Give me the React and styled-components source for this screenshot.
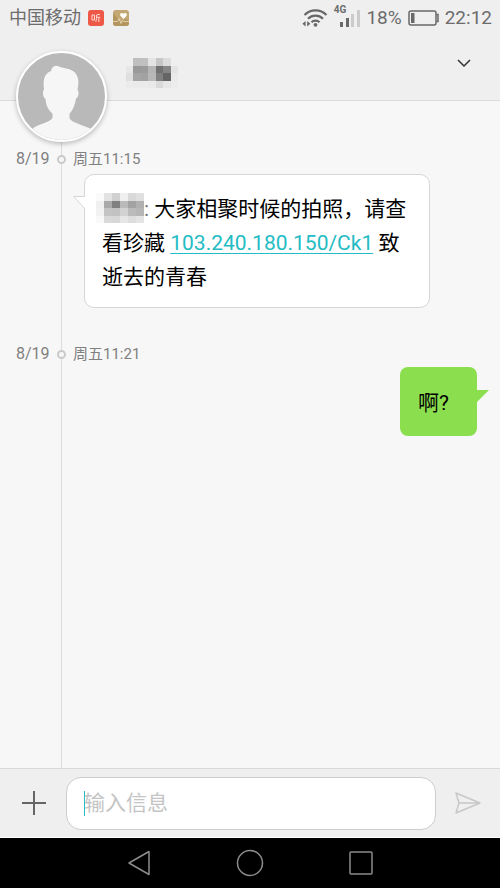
import React, { useState } from "react"
import styled, { createGlobalStyle } from "styled-components"

const GlobalStyle = createGlobalStyle`
  * {
    box-sizing: border-box;
  }
  body {
    margin: 0;
    background: #f7f7f7;
    font-family: Roboto, "Noto Sans CJK SC", sans-serif;
  }
  button {
    display: flex;
    align-items: center;
    justify-content: center;
    padding: 0;
    border: 0;
    background: none;
    cursor: pointer;
  }
  svg {
    display: block;
    flex-shrink: 0;
  }
`

const Screen = styled.div`
  display: flex;
  flex-direction: column;
  min-height: 100vh;
`

const StatusBar = styled.div`
  display: flex;
  align-items: center;
  justify-content: space-between;
  height: 36px;
  padding: 0 8px 0 9px;
  background: #efefef;
  color: #6c6c6c;
  font-size: 18px;
  line-height: 36px;
`

const StatusGroup = styled.div`
  display: flex;
  align-items: center;
  gap: ${props => props.$gap}px;
`

const StatusText = styled.span`
  font-size: 19px;
`

const NetworkLabel = styled.span`
  align-self: flex-start;
  margin-top: 5px;
  font-size: 10px;
  font-weight: 700;
  line-height: 10px;
`

const SignalGroup = styled.div`
  display: flex;
  align-items: center;
  height: 36px;
  svg {
    margin-left: -7px;
  }
`

const Header = styled.header`
  position: relative;
  display: flex;
  justify-content: space-between;
  height: 65px;
  padding: 22px 24px 0 126px;
  background: #efefef;
  border-bottom: 1px solid #dadada;
`

const Avatar = styled.div`
  position: absolute;
  top: 15px;
  left: 16px;
  z-index: 1;
  width: 91px;
  height: 91px;
  overflow: hidden;
  border: 2px solid #fff;
  border-radius: 50%;
  background: #b9b9b9;
  box-shadow: 0 2px 5px rgba(0, 0, 0, 0.25);
`

const MenuButton = styled.button`
  width: 24px;
  height: 24px;
  margin-top: -7px;
`

const Thread = styled.main`
  flex: 1;
  padding-top: 48px;
  background: linear-gradient(#dcdcdc, #dcdcdc) 61px 0 / 1px 100% no-repeat #f7f7f7;
`

const Entry = styled.section`
  display: flex;
  flex-direction: column;
  margin-bottom: 36px;
`

const Stamp = styled.div`
  display: grid;
  grid-template-columns: 41px 9px 1fr;
  align-items: center;
  height: 20px;
  margin-bottom: 3px;
  padding-left: 16px;
  color: #808080;
  font-size: 15px;
  line-height: 20px;
  time:first-child {
    font-size: 16px;
  }
  time:last-child {
    padding-left: 7px;
  }
`

const Dot = styled.span`
  width: 9px;
  height: 9px;
  border: 2px solid #cacaca;
  border-radius: 50%;
  background: #f7f7f7;
`

const Bubble = styled.div`
  position: relative;
  color: #000;
  font-size: 21px;
  line-height: 34px;
  p {
    margin: 0;
  }
`

const Received = styled(Bubble)`
  margin: 2px 70px 0 84px;
  padding: 17px 16px 13px 17px;
  border: 1px solid #d6d6d6;
  border-radius: 10px;
  background: #fff;
`

const Sent = styled(Bubble)`
  align-self: flex-end;
  margin: 0 23px 0 70px;
  padding: 19px 28px 16px 18px;
  border-radius: 8px;
  background: #8bdf4f;
`

const ReceivedTail = styled.svg`
  position: absolute;
  top: 21px;
  left: -12px;
`

const SentTail = styled.svg`
  position: absolute;
  top: 23px;
  right: -12px;
`

const NameMark = styled.span`
  display: inline-block;
  margin-left: -6px;
  vertical-align: -7px;
`

const Colon = styled.span`
  color: #777;
`

const MessageLink = styled.a`
  color: #23bcc4;
  text-decoration: underline;
  text-decoration-thickness: 1px;
  text-underline-offset: 3px;
`

const Composer = styled.form`
  display: flex;
  align-items: center;
  gap: 18px;
  height: 70px;
  padding: 0 18px 0 20px;
  background: #efefef;
  border-top: 1px solid #d9d9d9;
  border-bottom: 1px solid #fff;
`

const IconButton = styled.button`
  width: 28px;
  height: 28px;
`

const MessageInput = styled.input`
  flex: 1;
  min-width: 0;
  height: 53px;
  padding: 0 17px;
  border: 1px solid #cdcdcd;
  border-radius: 15px;
  outline: 0;
  background: linear-gradient(#23bcc4, #23bcc4) 17px 50% / 1px 25px no-repeat #fff;
  color: #000;
  font-family: inherit;
  font-size: 21px;
  &::placeholder {
    color: #c4c4c4;
    opacity: 1;
  }
`

const NavBar = styled.nav`
  display: flex;
  align-items: center;
  justify-content: center;
  gap: 83px;
  height: 50px;
  background: #000;
  button {
    width: 28px;
    height: 28px;
  }
`

const titleCells = [
  ["#efefef", "#bfbfbf", "#c0c0c0", "#e3e3e3", "#c6c6c6", "#dcdcdc", "#efefef"],
  ["#e7e7e7", "#999999", "#9b9b9b", "#b5b5b5", "#707070", "#868686", "#e4e4e4"],
  ["#dfdfdf", "#a5a5a5", "#a2a2a2", "#b8b8b8", "#808080", "#656565", "#eaeaea"],
  ["#ebebeb", "#eaeaea", "#ebebeb", "#e9e9e9", "#d9d9d9", "#e6e6e6", "#ececec"],
]

const senderCells = [
  ["#fafafa", "#e2e2e2", "#d0d0d0", "#efefef", "#d9d9d9", "#e0e0e0"],
  ["#f0f0f0", "#aaaaaa", "#808080", "#bababa", "#a2a2a2", "#b0b0b0"],
  ["#f2f2f2", "#c4c4c4", "#c2c2c2", "#d2d2d2", "#bbbbbb", "#b6b6b6"],
  ["#f9f9f9", "#d9d9d9", "#d7d7d7", "#e6e6e6", "#dddddd", "#e4e4e4"],
]

const Mosaic = ({ cells, width, height }) => (
  <svg
    width={width}
    height={height}
    viewBox={`0 0 ${cells[0].length} ${cells.length}`}
    preserveAspectRatio="none"
    shapeRendering="crispEdges"
    aria-hidden="true"
  >
    {cells.map((row, y) =>
      row.map((fill, x) => (
        <rect key={`${x}-${y}`} x={x} y={y} width="1" height="1" fill={fill} />
      ))
    )}
  </svg>
)

const ListenIcon = () => (
  <svg width="16" height="16" viewBox="0 0 16 16" fill="none">
    <rect width="16" height="16" rx="3" fill="#ee5847" />
    <path d="M4 5h2.5v5H4zM12 4.2L8.5 5v3.5L7.8 12M8.5 7.3H12.4M10.8 7.3V12" stroke="#ffd9d2" />
  </svg>
)

const HealthIcon = () => (
  <svg width="16" height="16" viewBox="0 0 16 16" fill="none">
    <rect width="16" height="16" rx="3" fill="#c4a873" />
    <path d="M0 3l8 9 5-3 3 2v2a3 3 0 0 1-3 3H3a3 3 0 0 1-3-3z" fill="#b3955f" />
    <path d="M0 11.5h4.5L6 8.5l2 5 1.5-3 1 1H16" stroke="#eadcc0" strokeWidth="0.8" />
    <path d="M10.5 9L7.6 6C6 4 8.5 1.8 10.5 3.8 12.5 1.8 15 4 13.4 6z" fill="#fff" />
  </svg>
)

const WifiIcon = () => (
  <svg width="26" height="18" viewBox="0 0 26 18" fill="none" stroke="#686868">
    <path d="M2.5 6a15.5 15.5 0 0 1 22 0M6 9.7a10.5 10.5 0 0 1 15 0M9.5 13.3a5.6 5.6 0 0 1 8 0" strokeWidth="2.2" />
    <circle cx="13.5" cy="15.8" r="1.9" fill="#686868" stroke="none" />
    <path d="M3.6 12v5.4L.4 14.700zM5.200 12v5.400l3.200-2.700z" fill="#686868" stroke="none" />
  </svg>
)

const SignalIcon = () => (
  <svg width="21" height="18" viewBox="0 0 21 18">
    <path d="M1 13h3v5H1zM7 9h3v9H7z" fill="#686868" />
    <path d="M12 5h3v13h-3zM18 1h3v17h-3z" fill="#cbcbcb" />
  </svg>
)

const BatteryIcon = () => (
  <svg width="31" height="16" viewBox="0 0 31 16" fill="none">
    <rect x="1" y="1" width="27" height="14" rx="2" stroke="#686868" strokeWidth="1.5" />
    <path d="M3 3h3.5v10H3z" fill="#686868" />
    <path d="M28.5 4.500h1.500v7h-1.500" stroke="#686868" strokeWidth="1.5" />
  </svg>
)

const PersonIcon = () => (
  <svg width="87" height="87" viewBox="0 0 87 87">
    <path
      d="M15 75.500c4-4 17-6 19.500-10.500v-4.500c-4-3.500-6.500-7.500-7-14.500-3-2.500-3-7-1.500-10-1-8-.5-15 7-18 1-5 5-6 8-4.500 5 2 12 2 16 6 4 5 4 11 2.500 17 2 3 1 8-1.500 9-1 6-3 12-6.500 15v5c4 5 13 6 22.500 11V87H15z"
      fill="#f6f6f6"
    />
  </svg>
)

const entries = [
  {
    id: 1,
    date: "8/19",
    time: "周五11:15",
    before: "大家相聚时候的拍照，请查看珍藏",
    link: "103.240.180.150/Ck1",
    after: "致逝去的青春",
  },
  { id: 2, date: "8/19", time: "周五11:21", mine: true, text: "啊?" },
]

const ReceivedMessage = ({ before, link, after }) => (
  <Received>
    <ReceivedTail width="12" height="15" viewBox="0 0 12 15">
      <path d="M12 .5H.8L12 12.500z" fill="#fff" />
      <path d="M12 .5H.8L11.500 12.500" fill="none" stroke="#d6d6d6" />
    </ReceivedTail>
    <p>
      <NameMark>
        <Mosaic cells={senderCells} width={48} height={30} />
      </NameMark>
      <Colon>:</Colon> {before} <MessageLink href="#link">{link}</MessageLink> {after}
    </p>
  </Received>
)

const SentMessage = ({ text }) => (
  <Sent>
    <SentTail width="13" height="13" viewBox="0 0 13 13">
      <path d="M0 0h13L0 13z" fill="#8bdf4f" />
    </SentTail>
    <p>{text}</p>
  </Sent>
)

const App = () => {
  const [draft, setDraft] = useState("")
  return (
    <Screen>
      <GlobalStyle />
      <StatusBar>
        <StatusGroup $gap={7}>
          <span>中国移动</span>
          <StatusGroup $gap={9}>
            <ListenIcon />
            <HealthIcon />
          </StatusGroup>
        </StatusGroup>
        <StatusGroup $gap={6}>
          <WifiIcon />
          <SignalGroup>
            <NetworkLabel>4G</NetworkLabel>
            <SignalIcon />
          </SignalGroup>
          <StatusText>18%</StatusText>
          <BatteryIcon />
          <StatusText as="time">22:12</StatusText>
        </StatusGroup>
      </StatusBar>
      <Header>
        <Avatar>
          <PersonIcon />
        </Avatar>
        <Mosaic cells={titleCells} width={52} height={30} />
        <MenuButton type="button" aria-label="更多">
          <svg width="14" height="8" viewBox="0 0 14 8" fill="none" stroke="#333" strokeWidth="1.5">
            <path d="M1 1l6 6 6-6" />
          </svg>
        </MenuButton>
      </Header>
      <Thread>
        {entries.map(entry => (
          <Entry key={entry.id}>
            <Stamp>
              <time>{entry.date}</time>
              <Dot />
              <time>{entry.time}</time>
            </Stamp>
            {entry.mine ? <SentMessage {...entry} /> : <ReceivedMessage {...entry} />}
          </Entry>
        ))}
      </Thread>
      <Composer onSubmit={e => e.preventDefault()}>
        <IconButton type="button" aria-label="添加">
          <svg width="24" height="24" viewBox="0 0 24 24" stroke="#666" strokeWidth="2">
            <path d="M12 0v24M0 12h24" />
          </svg>
        </IconButton>
        <MessageInput
          type="text"
          aria-label="输入信息"
          placeholder="输入信息"
          value={draft}
          onChange={e => setDraft(e.target.value)}
        />
        <IconButton type="submit" aria-label="发送">
          <svg width="26" height="22" viewBox="0 0 26 22" fill="none" stroke="#c8c8c8" strokeWidth="1.5" strokeLinejoin="round">
            <path d="M1 1l24 10L1 21l3-10zM4 11h21" />
          </svg>
        </IconButton>
      </Composer>
      <NavBar>
        <button type="button" aria-label="返回">
          <svg width="24" height="26" viewBox="0 0 24 26" fill="none" stroke="#8c8c8c" strokeWidth="1.5" strokeLinejoin="round">
            <path d="M22 1.500v23L2 13z" />
          </svg>
        </button>
        <button type="button" aria-label="主页">
          <svg width="28" height="28" viewBox="0 0 28 28" fill="none" stroke="#8c8c8c" strokeWidth="1.5">
            <circle cx="14" cy="14" r="12.5" />
          </svg>
        </button>
        <button type="button" aria-label="最近任务">
          <svg width="24" height="24" viewBox="0 0 24 24" fill="none" stroke="#8c8c8c" strokeWidth="1.5">
            <rect x="1" y="1" width="22" height="22" rx="1" />
          </svg>
        </button>
      </NavBar>
    </Screen>
  )
}

export default App
